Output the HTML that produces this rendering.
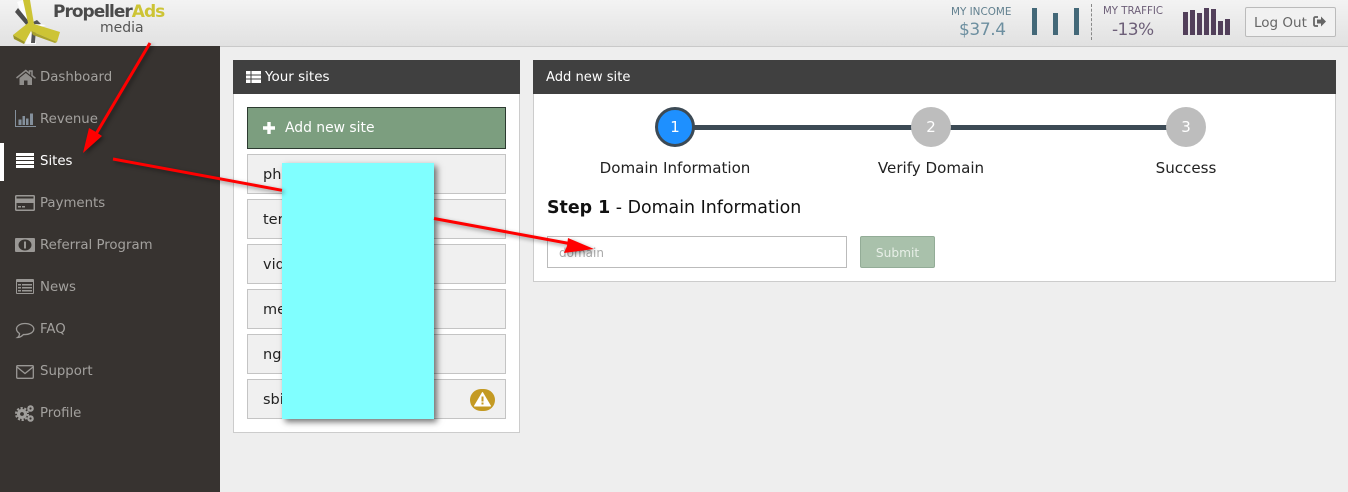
<!DOCTYPE html>
<html><head><meta charset="utf-8"><style>
html,body{margin:0;padding:0}
body{width:1348px;height:492px;overflow:hidden;position:relative;background:#eeeeee;font-family:"DejaVu Sans",sans-serif}
.a{position:absolute;white-space:nowrap}
#top{left:0;top:0;width:1348px;height:46px;background:linear-gradient(#f3f3f3,#e1e1e1);border-bottom:1px solid #c9c9c9}
#side{left:0;top:46px;width:220px;height:446px;background:#373330}
.n{left:40px;font-size:13.3px;color:#a3a19e;line-height:20px}
.ph{background:#404040;color:#fff;height:34px;top:60px;font-size:13.5px;line-height:35px}
.card{background:#fff;border:1px solid #ccc;box-sizing:border-box}
.row{left:247px;width:259px;height:40px;box-sizing:border-box;background:#f0f0f0;border:1px solid #c4c4c4;font-size:14.5px;line-height:41px;padding-left:15px;color:#222}
.c{width:40px;height:40px;border-radius:50%;background:#bdbdbd;color:#fff;text-align:center;line-height:40px;font-size:15px;top:107px}
.l{font-size:15.1px;color:#222;top:158px;line-height:20px;text-align:center;width:240px}
.b{background:#436878;width:5px}.t{background:#523f5a;width:5px}
svg{position:absolute;overflow:visible}
</style></head><body>
<div class="a" id="top"></div>
<div class="a" id="side"></div>

<svg style="left:0;top:0" width="60" height="46" viewBox="0 0 60 46">
<path d="M17 2L23 0L31 24L27 27Z" fill="#fdfdfd"/>
<path d="M15 12L18 8L30 23L28 27Z" fill="#4d4d4d"/>
<path d="M30 30L36 29L36 44L25 44Z" fill="#fbfbfb"/>
<path d="M32 31L36 30L35 43L31 43Z" fill="#555"/>
<path d="M33 22L37 20L41 24L35 25Z" fill="#555"/>
<path d="M35 24L46 25L38 28Z" fill="#fff"/>
<path d="M23 0L30 0L34 24L60 32L57 42L31 31L25 42L13 35L28 23Z" fill="#cdc435"/>
<path d="M13 35L25 42L24 44L14 39Z" fill="#9a9426"/>
<path d="M31 31L57 42L55 43L33 35Z" fill="#a9a22c"/>
</svg>
<div class="a" style="left:53px;top:1px;font-size:17px;font-weight:bold;color:#4a4a4a;line-height:22px;letter-spacing:-1px">Propeller<span style="color:#cdc435">Ads</span></div>
<div class="a" style="left:100px;top:18px;font-size:14px;color:#555;line-height:20px">media</div>

<div class="a" style="left:951px;top:5px;font-size:10.4px;color:#62808f;line-height:14px">MY INCOME</div>
<div class="a" style="left:959px;top:19px;font-size:17px;color:#6d8fa0;line-height:22px;letter-spacing:-.4px">$37.4</div>
<div class="a b" style="left:1032px;top:8px;height:27px"></div>
<div class="a b" style="left:1053px;top:13px;height:22px"></div>
<div class="a b" style="left:1074px;top:8px;height:27px"></div>
<div class="a" style="left:1091px;top:4px;height:36px;border-left:1px dashed #888"></div>
<div class="a" style="left:1103px;top:5px;font-size:10.2px;color:#6d5f78;line-height:14px">MY TRAFFIC</div>
<div class="a" style="left:1112px;top:19px;font-size:17px;color:#6d5f78;line-height:22px;letter-spacing:-.6px">-13%</div>
<div class="a t" style="left:1183px;top:12px;height:23px"></div>
<div class="a t" style="left:1190px;top:10px;height:25px"></div>
<div class="a t" style="left:1197px;top:13px;height:22px"></div>
<div class="a t" style="left:1204px;top:8px;height:27px"></div>
<div class="a t" style="left:1211px;top:9px;height:26px"></div>
<div class="a t" style="left:1218px;top:21px;height:14px"></div>
<div class="a t" style="left:1225px;top:19px;height:16px"></div>
<div class="a" style="left:1245px;top:7px;width:91px;height:30px;box-sizing:border-box;border:1px solid #bbb;border-radius:2px;background:#f1f1f1;color:#666;font-size:13.5px;line-height:30px;padding-left:8px">Log Out</div>
<svg style="left:1313px;top:15px" width="14" height="14" viewBox="0 0 14 14"><path d="M5 2H2.500Q1 2 1 3.500V9.500Q1 11 2.500 11H5" fill="none" stroke="#666" stroke-width="1.800"/><path d="M4 4.500H8V1.500L13 6.500L8 11.500V8.500H4Z" fill="#666"/></svg>

<div class="a" style="left:0;top:143px;width:4px;height:38px;background:#fff"></div>
<div class="a n" style="top:68px">Dashboard</div>
<div class="a n" style="top:110px">Revenue</div>
<div class="a n" style="top:152px;color:#fff">Sites</div>
<div class="a n" style="top:194px">Payments</div>
<div class="a n" style="top:236px">Referral Program</div>
<div class="a n" style="top:278px">News</div>
<div class="a n" style="top:320px">FAQ</div>
<div class="a n" style="top:362px">Support</div>
<div class="a n" style="top:404px">Profile</div>

<svg style="left:16px;top:70px" width="20" height="15" viewBox="0 0 20 15"><path d="M3.500 8V15H8V10.500H11.500V15H16V8L9.800 3Z" fill="#8f8d8a"/><path d="M.5 8L9.800 .5L13.500 3.500V1H16V5.500L19.500 8.300" fill="none" stroke="#8f8d8a" stroke-width="1.500"/></svg>
<svg style="left:15px;top:110px" width="21" height="18" viewBox="0 0 21 18" fill="#84909c"><path d="M0 0H1V16H21V17H0Z"/><rect x="3.500" y="9.500" width="3" height="5.500"/><rect x="7.500" y="6" width="2.500" height="9"/><rect x="11" y="8.500" width="2.500" height="6.500"/><rect x="15" y="3.500" width="3" height="11.500"/></svg>
<svg style="left:16px;top:153px" width="18" height="15" viewBox="0 0 18 15" fill="#fff"><rect width="18" height="3"/><rect y="4" width="18" height="3"/><rect y="8" width="18" height="3"/><rect y="12" width="18" height="3"/></svg>
<svg style="left:15px;top:195px" width="20" height="16" viewBox="0 0 20 16"><rect width="20" height="16" rx="1.500" fill="#9a9895"/><rect x="1.500" y="8" width="17" height="6.500" fill="#373330"/><rect x="1.500" y="1.500" width="17" height="2" fill="#373330"/><rect x="3" y="11" width="3" height="1.500" fill="#9a9895"/><rect x="7" y="11" width="3" height="1.500" fill="#9a9895"/></svg>
<svg style="left:15px;top:238px" width="20" height="14" viewBox="0 0 20 14"><rect width="20" height="14" rx="1" fill="#9a9895"/><ellipse cx="10" cy="7" rx="6.500" ry="5.500" fill="#373330"/><rect x="9" y="3.500" width="2" height="7" fill="#9a9895"/></svg>
<svg style="left:16px;top:279px" width="18" height="15" viewBox="0 0 18 15"><rect width="18" height="15" rx="1" fill="#9a9895"/><rect x="1" y="3" width="16" height="11" fill="#373330"/><g fill="#9a9895"><rect x="2" y="5" width="3" height="1.500"/><rect x="6" y="5" width="10" height="1.500"/><rect x="2" y="8" width="3" height="1.500"/><rect x="6" y="8" width="10" height="1.500"/><rect x="2" y="11" width="3" height="1.500"/><rect x="6" y="11" width="10" height="1.500"/></g></svg>
<svg style="left:15px;top:322px" width="20" height="17" viewBox="0 0 20 17"><path d="M10 1.500C5 1.500 1.500 4 1.500 7C1.500 9 3 10.500 4.500 11.500C4.500 13 4 14.500 2.500 15.500C5 15.500 7 14 8.500 12.500C14 13 18.800 10.500 18.800 7C18.800 4 15 1.500 10 1.500Z" fill="none" stroke="#9a9895" stroke-width="1.300"/></svg>
<svg style="left:16px;top:365px" width="18" height="14" viewBox="0 0 18 14"><rect x=".7" y=".7" width="16.600" height="12.600" rx="1" fill="none" stroke="#9a9895" stroke-width="1.300"/><path d="M1 2L9 8.500L17 2" fill="none" stroke="#9a9895" stroke-width="1.300"/></svg>
<svg style="left:15px;top:404px" width="20" height="19" viewBox="0 0 20 19"><circle cx="7" cy="10" r="3.500" fill="none" stroke="#a09e9b" stroke-width="3.200"/><circle cx="7" cy="10" r="6" fill="none" stroke="#a09e9b" stroke-width="2" stroke-dasharray="2.200 1.600"/><circle cx="15.500" cy="4.500" r="2.200" fill="none" stroke="#a09e9b" stroke-width="2.200"/><circle cx="15.500" cy="14.500" r="2.200" fill="none" stroke="#a09e9b" stroke-width="2.200"/></svg>

<div class="a card" style="left:233px;top:60px;width:287px;height:373px"></div>
<div class="a ph" style="left:233px;width:274px;padding-left:13px"><span style="margin-left:19px">Your sites</span></div>
<svg style="left:246px;top:71px" width="15" height="12" viewBox="0 0 15 12" fill="#fff"><path d="M0 0H15V12H0Z"/><rect y="3.500" width="15" height="1" fill="#404040"/><rect y="7.500" width="15" height="1" fill="#404040"/><rect x="4.500" width="1" height="12" fill="#404040"/></svg>
<div class="a" style="left:247px;top:107px;width:259px;height:42px;box-sizing:border-box;background:#7c9e7f;border:1px solid #2c3a30;color:#fff;font-size:13.900px;line-height:40px;padding-left:37px">Add new site</div>
<svg style="left:263px;top:122px" width="12" height="12" viewBox="0 0 12 12" fill="#fff"><path d="M4.300 0H7.700V4.300H12V7.700H7.700V12H4.300V7.700H0V4.300H4.300Z"/></svg>
<div class="a row" style="top:154px">ph</div>
<div class="a row" style="top:199px">ter</div>
<div class="a row" style="top:244px">vid</div>
<div class="a row" style="top:289px">me</div>
<div class="a row" style="top:334px">nga</div>
<div class="a row" style="top:379px">sbi</div>
<div class="a" style="left:470px;top:389px;width:25px;height:22px;border-radius:11px;background:#c49a23"></div>
<svg style="left:474px;top:392px" width="17" height="15" viewBox="0 0 17 15"><path d="M8.500 .5L16.500 14H.5Z" fill="#fff" stroke="#fff" stroke-linejoin="round"/><rect x="7.500" y="4.500" width="2" height="5" fill="#c49a23"/><rect x="7.500" y="10.500" width="2" height="2" fill="#c49a23"/></svg>

<div class="a card" style="left:533px;top:60px;width:803px;height:222px"></div>
<div class="a ph" style="left:533px;width:790px;padding-left:13px;font-size:13.100px">Add new site</div>
<div class="a" style="left:675px;top:125px;width:511px;height:5px;background:#3c4a55"></div>
<div class="a c" style="left:655px;box-sizing:border-box;background:#1e90ff;border:3px solid #3c4a55;line-height:34px">1</div>
<div class="a c" style="left:911px">2</div>
<div class="a c" style="left:1166px">3</div>
<div class="a l" style="left:555px">Domain Information</div>
<div class="a l" style="left:811px">Verify Domain</div>
<div class="a l" style="left:1066px">Success</div>
<div class="a" style="left:547px;top:196px;font-size:17.400px;line-height:24px;color:#111"><b>Step 1</b> - Domain Information</div>
<div class="a" style="left:547px;top:236px;width:300px;height:32px;box-sizing:border-box;border:1px solid #bbb;background:#fff;color:#aaa;font-size:12px;line-height:33px;padding-left:11px">domain</div>
<div class="a" style="left:860px;top:236px;width:75px;height:32px;box-sizing:border-box;border:1px solid #93ac97;border-radius:2px;background:#a9c1ab;color:#e8efe8;font-size:12.200px;line-height:32px;text-align:center">Submit</div>

<div class="a" style="left:282px;top:163px;width:152px;height:256px;background:#80ffff;box-shadow:3px 3px 6px rgba(0,0,0,.55)"></div>

<svg style="left:0;top:0;filter:drop-shadow(2px 2px 2px rgba(0,0,0,.4))" width="1348" height="492" viewBox="0 0 1348 492">
<path d="M150 43L96 134" stroke="#f00" stroke-width="3" fill="none"/>
<path d="M83 153L89 128L96 132L102 136Z" fill="#f00"/>
<path d="M113 159L282 190.300" stroke="#f00" stroke-width="3" fill="none"/>
</svg>
<svg style="left:0;top:0;filter:drop-shadow(2px 2px 2px rgba(0,0,0,.4))" width="1348" height="492" viewBox="0 0 1348 492">
<path d="M434 218.500L572 244" stroke="#f00" stroke-width="3" fill="none"/>
<path d="M594 249L564 253L567 246L568 238Z" fill="#f00"/>
</svg>
</body></html>
